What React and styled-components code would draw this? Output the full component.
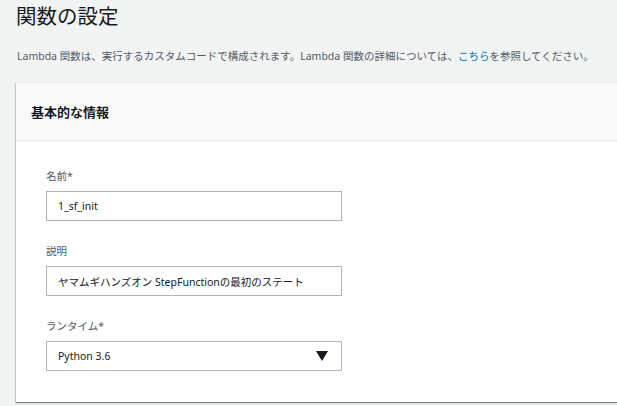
import React from "react";
import styled, { createGlobalStyle } from "styled-components";

const GlobalStyle = createGlobalStyle`
  html, body {
    margin: 0;
    padding: 0;
    background: #f2f3f3;
    overflow: hidden;
  }
  body {
    font-family: "Noto Sans", "Noto Sans CJK JP", sans-serif;
    color: #16191f;
  }
`;

const Page = styled.div`
  width: 617px;
  height: 406px;
  padding: 0 0 0 16px;
  box-sizing: border-box;
  overflow: hidden;
`;

const Title = styled.h1`
  margin: 0;
  padding-top: 2px;
  font-size: 20.5px;
  font-weight: 400;
  line-height: 28px;
  color: #16191f;
`;

const Intro = styled.p`
  margin: 18px 0 0 1px;
  font-size: 10.5px;
  line-height: 16px;
  color: #545b64;
  white-space: nowrap;
`;

const Link = styled.a`
  color: #0073bb;
  text-decoration: none;
`;

const Card = styled.section`
  margin-top: 18px;
  width: 640px;
  background: #fff;
  border-top: 1px solid #eaeded;
  box-shadow: 0 1px 1px 0 rgba(0, 28, 36, 0.3), 1px 1px 1px 0 rgba(0, 28, 36, 0.15),
    -1px 1px 1px 0 rgba(0, 28, 36, 0.15);
`;

const CardHeader = styled.div`
  height: 57px;
  display: flex;
  align-items: center;
  padding: 0 15px;
  background: #fafafa;
  border-bottom: 1px solid #eaeded;
`;

const CardTitle = styled.h2`
  margin: 0;
  font-size: 13px;
  font-weight: 700;
  color: #16191f;
`;

const CardBody = styled.div`
  display: flex;
  flex-direction: column;
  gap: 23px;
  padding: 28px 30px 31px;
`;

const Field = styled.div`
  display: flex;
  flex-direction: column;
  gap: 7px;
`;

const Label = styled.label`
  font-size: 10.5px;
  line-height: 15px;
  color: #545b64;
`;

const Box = styled.div`
  width: 296px;
  height: 30px;
  box-sizing: border-box;
  border: 1px solid #aab7b8;
  background: #fff;
  display: flex;
  align-items: center;
  justify-content: space-between;
  padding: 0 12px 0 11px;
  font-size: 10.5px;
  color: #16191f;
  white-space: nowrap;
`;

const Caret = styled.svg`
  width: 12px;
  height: 10px;
  margin-right: 1px;
`;

const fields = [
  { label: "名前*", value: "1_sf_init" },
  { label: "説明", value: "ヤマムギハンズオン StepFunctionの最初のステート" },
  { label: "ランタイム*", value: "Python 3.6", select: true },
];

const App = () => {
  return (
    <Page>
      <GlobalStyle />
      <Title>関数の設定</Title>
      <Intro>
        Lambda 関数は、実行するカスタムコードで構成されます。Lambda 関数の詳細については、
        <Link href="#">こちら</Link>を参照してください。
      </Intro>
      <Card>
        <CardHeader>
          <CardTitle>基本的な情報</CardTitle>
        </CardHeader>
        <CardBody>
          {fields.map((f) => (
            <Field key={f.label}>
              <Label>{f.label}</Label>
              <Box>
                <span>{f.value}</span>
                {f.select && (
                  <Caret viewBox="0 0 12 10">
                    <path d="M0 0 H12 L6 10 Z" fill="#16191f" />
                  </Caret>
                )}
              </Box>
            </Field>
          ))}
        </CardBody>
      </Card>
    </Page>
  );
};

export default App;
